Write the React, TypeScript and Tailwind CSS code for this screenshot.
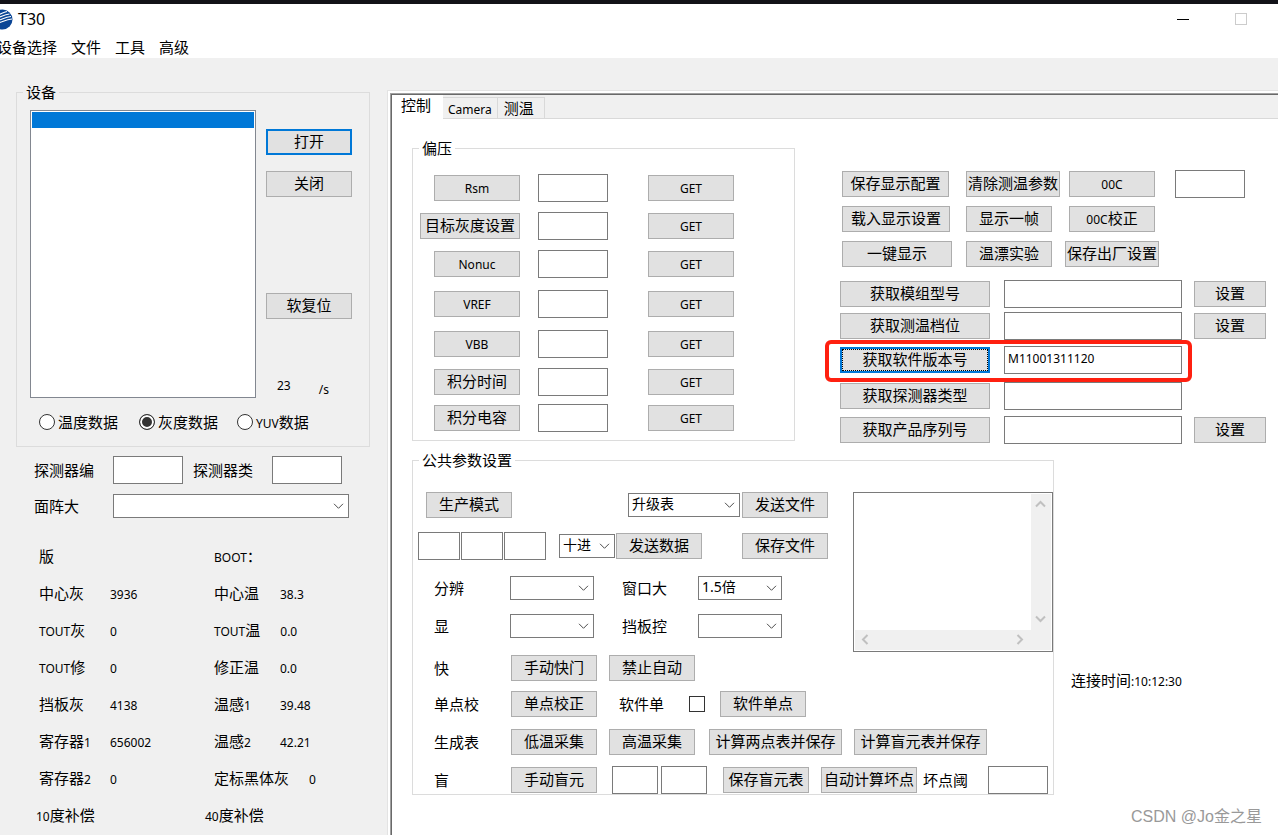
import React, { useState } from "react";
import clsx from "clsx";

const BIAS_ROWS = [
  { name: "Rsm", width: "w-[86px]", space: "" },
  { name: "目标灰度设置", width: "w-[100px]", space: "mt-2.5" },
  { name: "Nonuc", width: "w-[86px]", space: "mt-2.5" },
  { name: "VREF", width: "w-[86px]", space: "mt-3" },
  { name: "VBB", width: "w-[86px]", space: "mt-3" },
  { name: "积分时间", width: "w-[86px]", space: "mt-2.5" },
  { name: "积分电容", width: "w-[86px]", space: "mt-2" },
];

const QUERY_ROWS = [
  { name: "获取模组型号", value: "", canSet: true, space: "mt-3" },
  { name: "获取测温档位", value: "", canSet: true, space: "mt-1" },
  { name: "获取软件版本号", value: "M11001311120", canSet: false, space: "mt-1.5", marked: true },
  { name: "获取探测器类型", value: "", canSet: false, space: "mt-2" },
  { name: "获取产品序列号", value: "", canSet: true, space: "mt-1.5" },
];

const STATUS_ROWS = [
  ["版", "", "BOOT：", ""],
  ["中心灰", "3936", "中心温", "38.3"],
  ["TOUT灰", "0", "TOUT温", "0.0"],
  ["TOUT修", "0", "修正温", "0.0"],
  ["挡板灰", "4138", "温感1", "39.48"],
  ["寄存器1", "656002", "温感2", "42.21"],
  ["寄存器2", "0", "定标黑体灰", "0"],
];

const DATA_MODES = ["温度数据", "灰度数据", "YUV数据"];
const TABS = ["控制", "Camera", "测温"];

// Latin runs are set smaller than the Chinese text around them
function Mixed({ text }: { text: string }) {
  return (
    <>
      {text.split(/([\x20-\x7e]+)/).map((part, i) =>
        i % 2 ? <span key={i} className="text-xs">{part}</span> : part
      )}
    </>
  );
}

function Btn({ text, className, state = "normal" }: { text: string; className?: string; state?: "normal" | "default" | "focused" }) {
  return (
    <button
      type="button"
      className={clsx(
        "h-[26px] shrink-0 bg-[#e1e1e1] text-center leading-5 whitespace-nowrap hover:bg-[#e5f1fb]",
        state === "normal" ? "border border-[#adadad]" : "border-2 border-[#0078d7]",
        className ?? "w-[86px]"
      )}
    >
      <span
        className={clsx(
          "flex h-full items-center justify-center pb-0.5",
          state === "focused" && "border border-dotted border-black"
        )}
      >
        <span><Mixed text={text} /></span>
      </span>
    </button>
  );
}

function Field({ label, className, value = "" }: { label: string; className?: string; value?: string }) {
  return (
    <input
      type="text"
      aria-label={label}
      defaultValue={value}
      className={clsx("h-7 shrink-0 border border-[#7a7a7a] bg-white px-[3px] pb-1 text-xs outline-none", className ?? "w-[70px]")}
    />
  );
}

function Combo({ id, label, className, options = [""] }: { id?: string; label: string; className: string; options?: string[] }) {
  return (
    <div className={clsx("relative h-6 shrink-0", className)}>
      <select
        id={id}
        aria-label={label}
        className="h-full w-full appearance-none border border-[#7a7a7a] bg-white pr-5 pb-1 pl-[3px] text-[14px] leading-5 outline-none"
      >
        {options.map((o) => (
          <option key={o}>{o}</option>
        ))}
      </select>
      <svg className="pointer-events-none absolute top-2 right-[5px]" width="11" height="8" viewBox="0 0 11 8" fill="none" stroke="#4d4d4d">
        <path d="M1 1.8 5.5 6.3 10 1.8" />
      </svg>
    </div>
  );
}

function Group({ title, className, children }: { title: string; className?: string; children: React.ReactNode }) {
  return (
    <fieldset className={clsx("border border-[#dcdcdc]", className)}>
      <legend className="ml-1.5 px-[3px] leading-5">{title}</legend>
      {children}
    </fieldset>
  );
}

function Arrow({ d }: { d: string }) {
  return (
    <svg width="20" height="20" viewBox="0 0 20 20" fill="none" stroke="#c0c0c0" strokeWidth="2">
      <path d={d} />
    </svg>
  );
}

function LogBox() {
  return (
    <div className="grid h-40 w-[200px] shrink-0 grid-cols-[1fr_20px] grid-rows-[1fr_20px] border border-[#7a7a7a] bg-white p-px">
      <textarea aria-label="日志" className="resize-none outline-none" />
      <div className="flex flex-col justify-between bg-[#f0f0f0]">
        <Arrow d="M5 12.5 9.500 8l4.500 4.500" />
        <Arrow d="M5 6.500 9.500 11l4.500-4.500" />
      </div>
      <div className="flex justify-between bg-[#f0f0f0]">
        <Arrow d="M12.500 5 8 9.500l4.500 4.500" />
        <Arrow d="M6.500 5 11 9.500l-4.500 4.500" />
      </div>
      <div className="bg-[#f0f0f0]" />
    </div>
  );
}

function DevicePanel() {
  const [mode, setMode] = useState("灰度数据");

  return (
    <section className="w-[387px] shrink-0 pt-6">
      <Group title="设备" className="mr-[17px] ml-4 pb-3">
        <div className="flex pt-2 pl-[13px]">
          <div role="listbox" aria-label="设备列表" className="h-72 w-[226px] border border-[#828790] bg-white p-px">
            <div role="option" aria-selected="true" className="h-4 bg-[#0078d7]" />
          </div>
          <div className="ml-2.5 flex flex-col pt-[19px]">
            <Btn text="打开" state="default" />
            <Btn text="关闭" className="mt-4 w-[86px]" />
            <Btn text="软复位" className="mt-24 w-[86px]" />
            <div className="mt-[55px] flex gap-7 pl-[11px] leading-5">
              <span><Mixed text="23" /></span>
              <span className="pt-1"><Mixed text="/s" /></span>
            </div>
          </div>
        </div>
        <div className="mt-3 grid h-6 grid-cols-[100px_98px_auto] items-center pl-[22px]">
          {DATA_MODES.map((m) => (
            <label key={m} className="flex items-center gap-[3px] whitespace-nowrap">
              <input
                type="radio"
                name="mode"
                checked={mode === m}
                onChange={() => setMode(m)}
                className="size-4 shrink-0 appearance-none rounded-full border border-[#333] bg-white checked:bg-[#333] checked:shadow-[inset_0_0_0_2px_white]"
              />
              <span><Mixed text={m} /></span>
            </label>
          ))}
        </div>
      </Group>

      <div className="mt-[9px] flex items-center pl-[34px]">
        <span className="w-[79px]">探测器编</span>
        <Field label="探测器编" />
        <span className="ml-2.5 w-[79px]">探测器类</span>
        <Field label="探测器类" />
      </div>
      <div className="mt-2.5 flex items-center pl-[34px]">
        <label htmlFor="array-size" className="w-[79px]">面阵大</label>
        <Combo id="array-size" label="面阵大" className="w-[236px]" />
      </div>

      <div className="mt-[19px]">
        {STATUS_ROWS.map(([a, av, b, bv]) => (
          <div key={a} className="flex h-[37px] items-center pl-[39px] whitespace-nowrap">
            <span className="w-[71px]"><Mixed text={a} /></span>
            <span className="w-[104px]"><Mixed text={av} /></span>
            <span className="min-w-[66px] pr-5"><Mixed text={b} /></span>
            <span><Mixed text={bv} /></span>
          </div>
        ))}
        <div className="flex h-[37px] items-center pl-9">
          <span className="w-[169px]"><Mixed text="10度补偿" /></span>
          <span><Mixed text="40度补偿" /></span>
        </div>
      </div>
    </section>
  );
}

function BiasGroup() {
  return (
    <Group title="偏压" className="w-[383px] shrink-0 pb-2">
      <div className="pt-4">
        {BIAS_ROWS.map((row) => (
          <div key={row.name} className={clsx("flex items-center", row.space)}>
            <div className="flex w-[107px] justify-end">
              <Btn text={row.name} className={row.width} />
            </div>
            <Field label={row.name} className="ml-[18px] w-[70px]" />
            <Btn text="GET" className="ml-10 w-[86px]" />
          </div>
        ))}
      </div>
    </Group>
  );
}

function QueryPanel() {
  return (
    <div className="ml-[45px] pt-8">
      <div className="grid auto-rows-[28px] grid-cols-[124px_98px_96px_auto] items-center gap-y-[7px] pl-0.5">
        <Btn text="保存显示配置" className="w-[107px]" />
        <Btn text="清除测温参数" className="w-[94px]" />
        <Btn text="00C" className="w-[86px] justify-self-center" />
        <Field label="00C" className="ml-[15px] w-[70px]" />
        <Btn text="载入显示设置" className="w-[108px]" />
        <Btn text="显示一帧" />
        <Btn text="00C校正" className="w-[86px] justify-self-center" />
        <span />
        <Btn text="一键显示" className="w-[110px]" />
        <Btn text="温漂实验" />
        <Btn text="保存出厂设置" className="w-[94px] justify-self-center" />
      </div>

      {QUERY_ROWS.map((row) => (
        <div key={row.name} className={clsx("relative flex w-fit items-center", row.space)}>
          <Btn text={row.name} className="w-[150px]" state={row.marked ? "focused" : "normal"} />
          <Field label={row.name} value={row.value} className="ml-3.5 w-[178px]" />
          {row.canSet && <Btn text="设置" className="ml-3 w-[72px]" />}
          {row.marked && (
            <div className="pointer-events-none absolute -top-1.5 -right-2.5 -bottom-2 -left-[15px] z-10 rounded-md border-4 border-[#ff2010]" />
          )}
        </div>
      ))}
    </div>
  );
}

function CommonGroup() {
  return (
    <Group title="公共参数设置" className="w-[642px] shrink-0">
      <div className="flex">
        <div className="w-[440px] shrink-0 pt-[21px]">
          <div className="flex h-7 items-center pl-[13px]">
            <Btn text="生产模式" />
            <Combo label="升级类型" className="ml-[116px] w-28" options={["升级表"]} />
            <Btn text="发送文件" className="ml-0.5 w-[86px]" />
          </div>
          <div className="mt-[13px] flex items-center pl-[5px]">
            <div className="flex gap-px">
              <Field label="数据1" className="w-[42px]" />
              <Field label="数据2" className="w-[42px]" />
              <Field label="数据3" className="w-[42px]" />
            </div>
            <Combo label="进制" className="ml-[13px] w-14" options={["十进"]} />
            <Btn text="发送数据" className="ml-px w-[86px]" />
            <Btn text="保存文件" className="ml-10 w-[86px]" />
          </div>
          <div className="mt-4 flex items-center pl-[21px]">
            <label htmlFor="resolution" className="w-[76px]">分辨</label>
            <Combo id="resolution" label="分辨" className="w-[84px]" />
            <label htmlFor="window-size" className="ml-7 w-[76px]">窗口大</label>
            <Combo id="window-size" label="窗口大" className="w-[84px]" options={["1.5倍"]} />
          </div>
          <div className="mt-3.5 flex items-center pl-[21px]">
            <label htmlFor="display" className="w-[76px]">显</label>
            <Combo id="display" label="显" className="w-[84px]" />
            <label htmlFor="shutter" className="ml-7 w-[76px]">挡板控</label>
            <Combo id="shutter" label="挡板控" className="w-[84px]" />
          </div>
          <div className="mt-[17px] flex items-center pl-[21px]">
            <span className="w-[77px]">快</span>
            <Btn text="手动快门" />
            <Btn text="禁止自动" className="ml-3 w-[86px]" />
          </div>
        </div>
        <div className="pt-[22px]">
          <LogBox />
        </div>
      </div>

      <div className="mt-2.5 flex items-center pl-[21px]">
        <span className="w-[77px]">单点校</span>
        <Btn text="单点校正" />
        <label htmlFor="soft-single" className="ml-[22px] w-[70px]">软件单</label>
        <input id="soft-single" type="checkbox" className="size-4 appearance-none border border-[#333] bg-white checked:bg-[#333] checked:shadow-[inset_0_0_0_3px_white]" />
        <Btn text="软件单点" className="ml-[15px] w-[86px]" />
      </div>
      <div className="mt-3 flex items-center pl-[21px]">
        <span className="w-[77px]">生成表</span>
        <Btn text="低温采集" />
        <Btn text="高温采集" className="ml-3 w-[86px]" />
        <Btn text="计算两点表并保存" className="ml-3.5 w-[133px]" />
        <Btn text="计算盲元表并保存" className="ml-3 w-[133px]" />
      </div>
      <div className="mt-[11px] flex items-center pl-[21px]">
        <span className="w-[77px]">盲</span>
        <Btn text="手动盲元" />
        <Field label="盲元X" className="ml-[15px] w-[46px]" />
        <Field label="盲元Y" className="ml-[3px] w-[46px]" />
        <Btn text="保存盲元表" className="ml-4 w-[86px]" />
        <Btn text="自动计算坏点" className="ml-3 w-24" />
        <span className="ml-1.5 w-[65px]">坏点阈</span>
        <Field label="坏点阈" className="w-[60px]" />
      </div>
    </Group>
  );
}

export default function App() {
  const [tab, setTab] = useState("控制");

  return (
    <div className="relative flex min-h-screen flex-col overflow-hidden bg-[#f0f0f0] font-['Noto_Sans','Noto_Sans_CJK_SC',sans-serif] text-[15px] leading-5 text-black">
      <div className="h-1 bg-[#121218]" />

      {/* Title bar */}
      <header className="flex h-8 items-center bg-white pb-0.5">
        <svg className="-ml-2" width="21" height="21" viewBox="0 0 21 21">
          <circle cx="10.5" cy="10.5" r="10" fill="#0a4595" />
          <g fill="none" stroke="#fff" strokeWidth="1.1">
            <path d="M3 6.500C8 6 10 3.500 15 2.500" />
            <path d="M2 9.500C9 8.500 11 5.500 17.500 5" />
            <path d="M1.500 12.500C9 11.500 12 8 19 7.500" />
            <path d="M2.500 15C10 13.500 13 10.500 20 10" />
          </g>
        </svg>
        <h1 className="ml-[5px] text-base leading-5">T30</h1>
        <div className="ml-auto flex items-center gap-[46px] pr-[31px]">
          <button type="button" aria-label="最小化" className="flex size-3 items-center">
            <span className="h-px w-3 bg-black" />
          </button>
          <button type="button" aria-label="最大化" className="size-3 border border-[#ccc]" />
        </div>
      </header>

      {/* Menu */}
      <nav className="-ml-[3px] flex h-[22px] items-center gap-3.5 bg-white">
        <button type="button">设备选择</button>
        <button type="button">文件</button>
        <button type="button">工具</button>
        <button type="button">高级</button>
      </nav>

      <div className="flex flex-1">
        <DevicePanel />

        <div className="mt-8 flex min-w-0 flex-1 border-t border-l border-[#e3e3e3] bg-white pt-0.5 pl-0.5">
          <div className="flex min-w-0 flex-1 border-t border-l border-[#a0a0a0]">
            <main className="min-w-0 flex-1 border-t border-l border-[#696969] bg-white">
              <div role="tablist" className="flex h-6 items-end bg-[#f0f0f0]">
                {TABS.map((t) => (
                  <button
                    key={t}
                    type="button"
                    role="tab"
                    aria-selected={tab === t}
                    onClick={() => setTab(t)}
                    className={clsx(
                      tab === t
                        ? "h-6 bg-white pr-3 pb-1 pl-[9px]"
                        : "h-[22px] border-t border-r border-b border-[#d9d9d9] px-[5px] pb-0.5",
                      t === "测温" && "pr-2.5 pl-1.5"
                    )}
                  >
                    <Mixed text={t} />
                  </button>
                ))}
                <div className="h-6 flex-1 border-b border-[#d9d9d9]" />
              </div>

              <div className="pt-[19px] pl-5">
                <div className="flex items-start">
                  <BiasGroup />
                  <QueryPanel />
                </div>
                <div className="mt-1.5 flex items-start">
                  <CommonGroup />
                  <p className="ml-[17px] pt-[220px] whitespace-nowrap">
                    <Mixed text="连接时间:10:12:30" />
                  </p>
                </div>
              </div>
            </main>
          </div>
        </div>
      </div>

      <span className="pointer-events-none absolute right-4 bottom-2 font-['Liberation_Sans','Noto_Sans_CJK_SC',sans-serif] text-base leading-5 text-[#999]">
        CSDN @Jo金之星
      </span>
    </div>
  );
}
